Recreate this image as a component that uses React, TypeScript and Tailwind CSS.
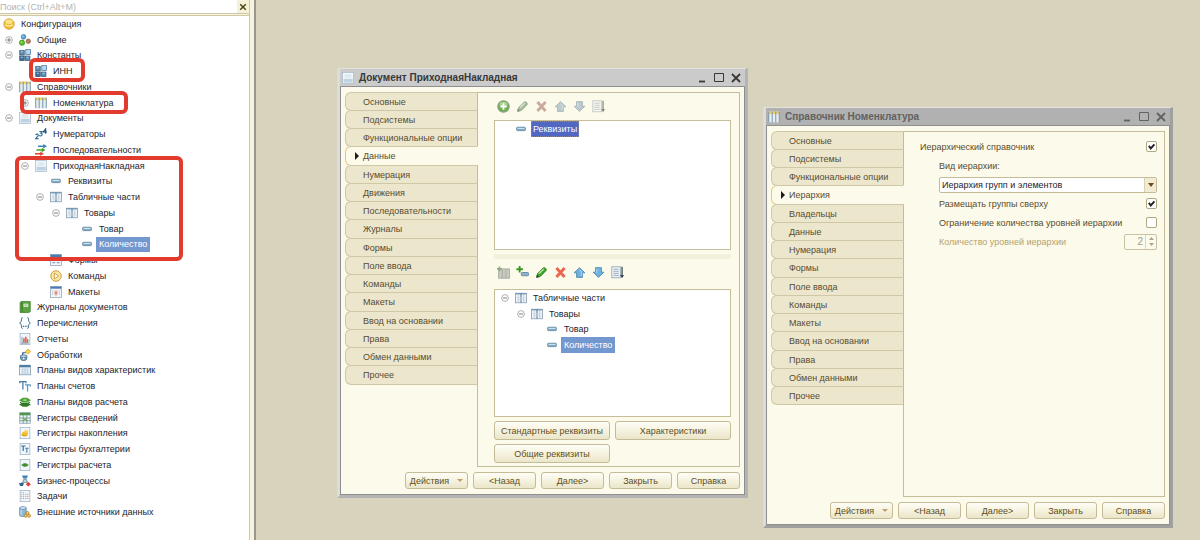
import { useState } from "react";
import type { ReactNode } from "react";
import clsx from "clsx";

type TreeNode = {
  level: 0 | 1 | 2 | 3 | 4 | 5;
  icon: string;
  label: string;
  toggle?: "plus" | "minus";
};

const TREE: TreeNode[] = [
  { level: 0, icon: "config", label: "Конфигурация" },
  { level: 1, icon: "common", label: "Общие", toggle: "plus" },
  { level: 1, icon: "constants", label: "Константы", toggle: "minus" },
  { level: 2, icon: "constants", label: "ИНН" },
  { level: 1, icon: "catalog", label: "Справочники", toggle: "minus" },
  { level: 2, icon: "catalog", label: "Номенклатура", toggle: "plus" },
  { level: 1, icon: "doc", label: "Документы", toggle: "minus" },
  { level: 2, icon: "numerators", label: "Нумераторы" },
  { level: 2, icon: "sequences", label: "Последовательности" },
  { level: 2, icon: "doc", label: "ПриходнаяНакладная", toggle: "minus" },
  { level: 3, icon: "attr", label: "Реквизиты" },
  { level: 3, icon: "tabular", label: "Табличные части", toggle: "minus" },
  { level: 4, icon: "tabular", label: "Товары", toggle: "minus" },
  { level: 5, icon: "attr", label: "Товар" },
  { level: 5, icon: "attr", label: "Количество" },
  { level: 3, icon: "forms", label: "Формы" },
  { level: 3, icon: "commands", label: "Команды" },
  { level: 3, icon: "templates", label: "Макеты" },
  { level: 1, icon: "journal", label: "Журналы документов" },
  { level: 1, icon: "enums", label: "Перечисления" },
  { level: 1, icon: "report", label: "Отчеты" },
  { level: 1, icon: "processing", label: "Обработки" },
  { level: 1, icon: "charTypes", label: "Планы видов характеристик" },
  { level: 1, icon: "accounts", label: "Планы счетов" },
  { level: 1, icon: "calcTypes", label: "Планы видов расчета" },
  { level: 1, icon: "infoReg", label: "Регистры сведений" },
  { level: 1, icon: "accumReg", label: "Регистры накопления" },
  { level: 1, icon: "accountReg", label: "Регистры бухгалтерии" },
  { level: 1, icon: "calcReg", label: "Регистры расчета" },
  { level: 1, icon: "process", label: "Бизнес-процессы" },
  { level: 1, icon: "task", label: "Задачи" },
  { level: 1, icon: "external", label: "Внешние источники данных" },
];

const TABULAR: TreeNode[] = [
  { level: 1, icon: "tabular", label: "Табличные части", toggle: "minus" },
  { level: 2, icon: "tabular", label: "Товары", toggle: "minus" },
  { level: 3, icon: "attr", label: "Товар" },
  { level: 3, icon: "attr", label: "Количество" },
];

const DOC_TABS = [
  "Основные", "Подсистемы", "Функциональные опции", "Данные", "Нумерация", "Движения",
  "Последовательности", "Журналы", "Формы", "Поле ввода", "Команды", "Макеты",
  "Ввод на основании", "Права", "Обмен данными", "Прочее",
];

const CATALOG_TABS = [
  "Основные", "Подсистемы", "Функциональные опции", "Иерархия", "Владельцы", "Данные",
  "Нумерация", "Формы", "Поле ввода", "Команды", "Макеты", "Ввод на основании", "Права",
  "Обмен данными", "Прочее",
];

const INDENT = ["pl-px", "pl-px", "pl-[17px]", "pl-[32px]", "pl-[48px]", "pl-[63px]"];

const page = <rect x="1.5" y="0.5" width="13" height="15" fill="#f2f6fa" stroke="#9db2c4" />;

const ICONS: Record<string, ReactNode> = {
  config: (
    <>
      <circle cx="8" cy="8" r="7" fill="#f0bd33" stroke="#d09a2c" />
      <ellipse cx="8" cy="5" rx="4.8" ry="3" fill="#fbe48c" />
      <path d="M2.5 9.4c3 1.2 8 1.2 11 0" fill="none" stroke="#fff0b4" strokeWidth="1.6" />
    </>
  ),
  common: (
    <>
      <circle cx="6" cy="3.8" r="3.1" fill="#5aa2d6" stroke="#3a7fb4" />
      <circle cx="4" cy="11.6" r="3.5" fill="#62c02c" stroke="#3f8f1b" />
      <circle cx="12.4" cy="9.6" r="2.9" fill="#b98465" stroke="#8d5b40" />
      <circle cx="5.2" cy="3" r="1" fill="#c5e2f6" />
      <circle cx="3.2" cy="10.6" r="1.1" fill="#c4eea4" />
    </>
  ),
  constants: (
    <>
      <rect x="1" y="2" width="6" height="6" fill="#5e8fb5" stroke="#31607f" />
      <rect x="9" y="0.8" width="6.4" height="6.4" fill="#b9d4e8" stroke="#4c7da3" />
      <rect x="1" y="9.4" width="6" height="6" fill="#3f719a" stroke="#28516f" />
      <rect x="8.6" y="9.4" width="6" height="6" fill="#5e8fb5" stroke="#31607f" />
      <path d="M2.4 3.6h3M2.4 11h3M10 11h3M11 3h2.6" stroke="#cfe2f0" />
    </>
  ),
  catalog: (
    <>
      <rect x="0.7" y="1" width="14.6" height="14" fill="#eef3f5" />
      <rect x="0.7" y="0.8" width="14.6" height="3.4" fill="#ecd06a" />
      <path d="M1 1v14M5.6 1v14M10.4 1v14M15 1v14" stroke="#6f8ea3" strokeWidth="1.3" />
      <path d="M3.3 5v10M8 5v10M12.7 5v10" stroke="#dfe8ee" />
    </>
  ),
  doc: (
    <>
      <rect x="0.6" y="0.6" width="14.8" height="14.8" fill="#f3f8fc" stroke="#a9bac8" />
      <rect x="2.2" y="9" width="12" height="5" fill="#bed2e2" />
      <path d="M3.5 4h9M3.5 6.6h9" stroke="#c3d3df" />
    </>
  ),
  numerators: (
    <>
      <path d="M0.8 9.2c1-1.7 4-1.3 3.6.6-.2 1.6-2.8 2.8-3.6 4.4h4" fill="none" stroke="#2c6c96" strokeWidth="1.5" />
      <path d="M5.8 4.6h3.6L7.6 7c2.6-.2 2.6 3.6-.2 3.6-.8 0-1.4-.3-1.8-.8" fill="none" stroke="#2c6c96" strokeWidth="1.5" />
      <path d="M14.2 7.6V1.2L11 5.4h5" fill="none" stroke="#1f4f74" strokeWidth="1.5" />
    </>
  ),
  sequences: (
    <>
      <path d="M4 2h7V0l5 3-5 3V4H4z" fill="#3b83b5" />
      <path d="M2 7h7V5l5 3-5 3V9H2z" fill="#46a12c" />
      <path d="M0 12h7v-2l5 3-5 3v-2H0z" fill="#e2452f" />
    </>
  ),
  attr: (
    <>
      <rect x="2" y="5.6" width="12" height="4.6" rx="1.4" fill="#86a9c2" stroke="#5c86a3" />
      <path d="M3.5 7.3h9" stroke="#d9e8f3" strokeWidth="1.2" />
    </>
  ),
  tabular: (
    <>
      <rect x="0.8" y="1.6" width="14.4" height="12.8" fill="#eef4f8" stroke="#7f97ab" />
      <path d="M1 2.4h14" stroke="#6f93b5" strokeWidth="1.6" />
      <path d="M8 2v12.4" stroke="#55758f" strokeWidth="1.4" />
      <path d="M4.4 4v10M11.6 4v10" stroke="#b4c6d4" />
      <path d="M2 7.5h12M2 10.5h12" stroke="#ccd9e3" />
    </>
  ),
  forms: (
    <>
      <rect x="0.8" y="0.8" width="14.4" height="14.4" fill="#f3f6f9" stroke="#8fa3b6" />
      <rect x="0.8" y="0.8" width="14.4" height="3.4" fill="#4d7db0" />
      <rect x="9" y="6" width="4" height="2.4" fill="#e2a08c" />
      <path d="M3 7h4M3 11.5h4M9 11.5h4" stroke="#8ea4b8" strokeWidth="1.6" />
    </>
  ),
  commands: (
    <>
      <circle cx="8" cy="8" r="7" fill="#f8e6a8" stroke="#cf9d35" strokeWidth="1.3" />
      <path d="M5.8 4l5.6 4-5.6 4z" fill="#fffdf2" stroke="#c08a2a" />
    </>
  ),
  templates: (
    <>
      <rect x="0.8" y="0.8" width="14.4" height="14.4" fill="#f3f6f9" stroke="#8fa3b6" />
      <rect x="0.8" y="0.8" width="14.4" height="2.8" fill="#4d7db0" />
      <path d="M3.5 5.5v7M12.5 5.5v7" stroke="#9ab0c4" strokeDasharray="1.5 1" />
      <path d="M8 5.2v8M5.4 9.2h5.2M6.2 7l3.6 4.4M9.8 7l-3.6 4.4" stroke="#dd6a5a" strokeWidth="0.9" />
    </>
  ),
  journal: (
    <>
      <path d="M1.5 1.8L4 .6h11v13.6l-2.2 1.2H1.5z" fill="#5ca342" stroke="#3c7d27" />
      <path d="M4 1v14" stroke="#2f6b1e" />
      <rect x="6" y="3.6" width="6.4" height="4.4" fill="#e4f3dc" />
      <path d="M7 5h4.4M7 6.6h4.4" stroke="#6aa653" strokeWidth="0.7" />
    </>
  ),
  enums: (
    <>
      <path d="M5 .8C2.4.8 3.6 3.4 3 5.6 2.7 7 1.6 7.8.8 8c.8.2 1.9 1 2.2 2.4.6 2.2-.6 4.8 2 4.8" fill="none" stroke="#3e6f94" strokeWidth="1.3" />
      <path d="M11 .8c2.6 0 1.4 2.6 2 4.8.3 1.4 1.4 2.2 2.2 2.4-.8.2-1.9 1-2.2 2.4-.6 2.2.6 4.8-2 4.8" fill="none" stroke="#3e6f94" strokeWidth="1.3" />
      <path d="M5 12.5h1.6M7.6 12.5h1.6M10 12.5h1.2" stroke="#3e6f94" strokeWidth="1.4" />
    </>
  ),
  report: (
    <>
      {page}
      <path d="M4 5v9" stroke="#9ab4ca" strokeWidth="1.6" />
      <path d="M6.6 7v6M9.2 5v8" stroke="#d8402f" strokeWidth="1.8" />
      <path d="M11.6 8.4v4.6" stroke="#4f9e3c" strokeWidth="1.8" />
      <path d="M3 13.6h10" stroke="#6d879c" />
    </>
  ),
  processing: (
    <>
      <path d="M12 0l3.6 3.4L12 7 8.4 3.4z" fill="#f6d24e" stroke="#c69524" strokeWidth="0.8" />
      <path d="M2 9.5h8.4v3.2c0 1.6-1.6 2.6-4.2 2.6S2 14.3 2 12.7z" fill="#6c9cc0" stroke="#2e5e82" />
      <path d="M5 8.5V5h4" fill="none" stroke="#2e5e82" strokeWidth="1.6" />
      <ellipse cx="6.2" cy="9.5" rx="4.6" ry="1.6" fill="#dce9f2" stroke="#2e5e82" />
      <circle cx="6.2" cy="12.7" r="1.3" fill="#e8f1f7" />
    </>
  ),
  charTypes: (
    <>
      <rect x="0.8" y="1.6" width="14.4" height="12.8" fill="#eef4f8" stroke="#7896ad" />
      <rect x="0.8" y="1.4" width="14.4" height="3" fill="#4a7ea8" />
      <path d="M5 5v9M8 5v9M11 5v9" stroke="#a5bccd" />
      <path d="M2 7.5h12M2 9.8h12M2 12h12" stroke="#c6d5e0" strokeWidth="0.8" />
    </>
  ),
  accounts: (
    <>
      <path d="M1 2.2h8.4M5.2 2v10.6M1 1.4v2.8M9.2 1.4v2.8" fill="none" stroke="#3e7fae" strokeWidth="1.7" />
      <path d="M8 6.4h7.2M11.4 6.4v8.8M15 6v2.6" fill="none" stroke="#5d98c2" strokeWidth="1.7" />
    </>
  ),
  calcTypes: (
    <>
      <path d="M0 11.2L5 9h6l5 2.2-5 3H5z" fill="#37802a" />
      <path d="M0 5.6l5-3.2h6l5 3.2-5 3.2H5z" fill="#4fa23a" />
      <path d="M1.5 8.4L5.500 11h5l4-2.600" fill="none" stroke="#2c6d21" strokeWidth="1.4" />
      <ellipse cx="8" cy="5.4" rx="2.6" ry="1.2" fill="#a9d99a" />
    </>
  ),
  infoReg: (
    <>
      <rect x="1" y="1" width="14" height="14" fill="#f0f5f8" stroke="#7f9bb0" />
      <rect x="1" y="1" width="14" height="3.4" fill="#4c9a4a" />
      <path d="M5.6 1v14M10.4 1v14M1 8h14M1 11.6h14" stroke="#5c8a78" />
      <rect x="6.2" y="8.6" width="3.6" height="2.5" fill="#6ab65a" />
    </>
  ),
  accumReg: (
    <>
      {page}
      <ellipse cx="7.4" cy="10.4" rx="4" ry="2.2" fill="#e2a51e" />
      <ellipse cx="8" cy="8.2" rx="4" ry="2.2" fill="#f2c235" />
      <ellipse cx="9.6" cy="5.6" rx="2.8" ry="1.6" fill="#f8d65e" />
    </>
  ),
  accountReg: (
    <>
      {page}
      <path d="M3 4h5.600M5.6 4v6.600" fill="none" stroke="#2f6f9f" strokeWidth="1.6" />
      <path d="M8 7h5M10.4 7v6" fill="none" stroke="#4a89b6" strokeWidth="1.6" />
    </>
  ),
  calcReg: (
    <>
      {page}
      <path d="M3 8l3.5-2.2h3L13 8l-3.5 2.2h-3z" fill="#3f8f2c" />
    </>
  ),
  process: (
    <>
      <path d="M4 .6h8l-1.6 4H5.6z" fill="#3f84b8" />
      <path d="M8 4.6V8M3 10.5L8 7.5l5 3" fill="none" stroke="#5c7286" strokeWidth="1.2" />
      <rect x="5.5" y="6.4" width="5" height="3.6" fill="#c9dbe8" stroke="#57758d" strokeWidth="0.8" />
      <path d="M0 10.8h6.6l-1.4 4H1.4z" fill="#35688f" />
      <path d="M12.4 9.4l3.4 3-3.4 3-3.4-3z" fill="#e0412e" />
    </>
  ),
  task: (
    <>
      {page}
      <path d="M3.6 3v10M6 3v10" stroke="#8ba7bf" strokeWidth="1.2" strokeDasharray="1.4 1.2" />
      <path d="M9 5v8M11.8 5v8" stroke="#c98a86" strokeWidth="1.4" strokeDasharray="1.4 1.4" />
    </>
  ),
  external: (
    <>
      <path d="M0.8 2.6v9.6c0 1 2 1.8 4.4 1.8s4.4-.8 4.4-1.8V2.6z" fill="#8fb8d6" stroke="#4b81a8" strokeWidth="0.9" />
      <ellipse cx="5.2" cy="2.6" rx="4.4" ry="1.8" fill="#dbeaf5" stroke="#4b81a8" strokeWidth="0.9" />
      <path d="M2.8 5v7.5" stroke="#d5e7f4" strokeWidth="1.3" />
      <circle cx="9" cy="13" r="2" fill="#f2d077" stroke="#a8781c" />
      <circle cx="13.4" cy="13" r="2" fill="#f2d077" stroke="#a8781c" />
      <circle cx="11.2" cy="9.2" r="2" fill="#f2d077" stroke="#a8781c" />
    </>
  ),
  add: (
    <>
      <circle cx="8" cy="8" r="7" fill="#6db24e" stroke="#8d9f86" strokeWidth="1.4" />
      <ellipse cx="8" cy="5" rx="5" ry="3" fill="#a3d489" />
      <path d="M8 4v8M4 8h8" stroke="#fff" strokeWidth="2.2" />
    </>
  ),
  addTable: (
    <>
      <rect x="2" y="3.6" width="13.4" height="11.4" fill="#c8cac0" stroke="#a3a79c" />
      <path d="M6.4 4v11M11 4v11" stroke="#a3a79c" />
      <path d="M3 .5v6M0 3.5h6" stroke="#8fa67e" strokeWidth="1.8" />
    </>
  ),
  addAttr: (
    <>
      <path d="M4.5 0v8M.5 4h8" stroke="#35961f" strokeWidth="2.2" />
      <rect x="6.5" y="8" width="9" height="4" rx="1.2" fill="#8fb2cb" stroke="#547f9d" />
    </>
  ),
  edit: (
    <>
      <path d="M2 13.8l1-4.2 7.4-7.4c1.6-.8 4 1.4 3.4 3.2L6.4 13z" fill="#3fa32b" stroke="#257817" />
      <path d="M4.8 9.6l6-6" stroke="#b4e4a0" strokeWidth="1.6" />
      <path d="M1.6 14.4l.8-3.4 2.6 2.4z" fill="#2a3c24" />
    </>
  ),
  remove: <path d="M3 2.5l10 11M13 2.5l-10 11" stroke="#ea6650" strokeWidth="3.6" />,
  up: (
    <>
      <path d="M8 2l6.6 6.4h-3V14H4.4V8.400h-3z" fill="#6fb2e2" stroke="#4a82a8" />
      <path d="M8 4.6l2.6 2.6v5" fill="none" stroke="#c3e2f6" />
    </>
  ),
  down: (
    <>
      <path d="M8 14l6.6-6.4h-3V2H4.4v5.600h-3z" fill="#6fb2e2" stroke="#4a82a8" />
      <path d="M6 3.500v5" stroke="#c3e2f6" />
    </>
  ),
  sort: (
    <>
      <rect x="1" y="1" width="10.5" height="13.5" fill="#f0f4f7" stroke="#8ba0b1" />
      <path d="M3 4h6.5M3 6.5h6.5M3 9h6.5M3 11.5h6.5" stroke="#8ba0b1" />
      <path d="M13.6 1v11" stroke="#333d45" strokeWidth="1.5" />
      <path d="M11.2 11h4.8l-2.4 4z" fill="#333d45" />
    </>
  ),
};

function Icon({ name, className }: { name: string; className?: string }) {
  return (
    <svg viewBox="0 0 16 16" className={clsx("shrink-0", className ?? "size-3")} aria-hidden="true">
      {ICONS[name]}
    </svg>
  );
}

function Toggle({ kind }: { kind: "plus" | "minus" }) {
  return (
    <svg viewBox="0 0 10 10" className="size-2" aria-hidden="true">
      <circle cx="5" cy="5" r="4.2" fill="#fff" stroke="#9c9c96" />
      <path d={kind === "plus" ? "M2.5 5h5M5 2.5v5" : "M2.5 5h5"} stroke="#6e6e68" strokeWidth="1.1" />
    </svg>
  );
}

function TreeRow({ node, selected, onSelect }: { node: TreeNode; selected: boolean; onSelect: () => void }) {
  return (
    <li
      role="treeitem"
      aria-selected={selected}
      onClick={onSelect}
      className={clsx("flex flex-1 items-stretch whitespace-nowrap cursor-default", INDENT[node.level])}
    >
      {node.level > 0 && (
        <span className="w-4 flex items-center justify-center">{node.toggle && <Toggle kind={node.toggle} />}</span>
      )}
      <span className="w-4 flex items-center justify-center">
        <Icon name={node.icon} />
      </span>
      <span className={clsx("ml-px px-[3px] flex items-center", selected ? "bg-[#7398d0] text-white" : "text-[#23232d]")}>
        {node.label}
      </span>
    </li>
  );
}

function Sidebar() {
  const [selected, setSelected] = useState(14);
  return (
    <aside className="w-64 shrink-0 flex bg-[#f8f4dc]">
      <div className="relative flex-1 bg-white">
        <div className="flex h-[14px] items-center border-b border-[#cfc7a6]">
          <input
            type="text"
            aria-label="Поиск"
            placeholder="Поиск (Ctrl+Alt+M)"
            className="flex-1 min-w-0 h-3 bg-transparent outline-none placeholder:text-[#b3b3b3]"
          />
          <button type="button" aria-label="Очистить" className="w-3 h-[13px] bg-[#f6f2da] flex items-center justify-center">
            <svg viewBox="0 0 8 8" className="size-2">
              <path d="M1.2 1.2l5.600 5.600M6.8 1.2L1.2 6.8" stroke="#4d4212" strokeWidth="1.5" />
            </svg>
          </button>
        </div>
        <div className="h-0.5 bg-[#f8f4dc] border-b border-[#cfc7a6]" />
        <ul role="tree" className="flex flex-col h-[504px]">
          {TREE.map((node, i) => (
            <TreeRow key={i} node={node} selected={i === selected} onSelect={() => setSelected(i)} />
          ))}
        </ul>

        {/* Callouts */}
        <div className="absolute left-[29px] top-[58px] w-[56px] h-[24px] rounded-md border-4 border-[#e23b2e] pointer-events-none" />
        <div className="absolute left-[20px] top-[91px] w-[108px] h-[23px] rounded-md border-4 border-[#e23b2e] pointer-events-none" />
        <div className="absolute left-[15px] top-[156px] w-[168px] h-[105px] rounded-md border-4 border-[#e23b2e] pointer-events-none" />
      </div>
      <div className="w-[7px] border-l border-[#d0c9a8] border-r-2 border-r-[#98968e]" />
    </aside>
  );
}

function WindowFrame({ title, icon, active, className, children }: {
  title: string;
  icon: string;
  active?: boolean;
  className: string;
  children: ReactNode;
}) {
  return (
    <section
      className={clsx(
        "absolute flex flex-col border-3 border-t border-t-[#e4e2da] border-l-[#dddcd6]",
        active ? "border-r-[#b4b4b4] border-b-[#b4b4b4]" : "border-r-[#a0a0a0] border-b-[#a0a0a0]",
        className,
      )}
    >
      <header
        className={clsx(
          "h-[17px] flex items-center pt-px pl-0.5 pr-[3px] text-[10px] font-bold",
          active ? "bg-[#cbcbcb] text-[#383838]" : "bg-[#b1b1b1] text-[#626262]",
        )}
      >
        <Icon name={icon} />
        <h2 className="ml-[5px] flex-1 whitespace-nowrap">{title}</h2>
        <div className="flex gap-[5px]">
          <button type="button" aria-label="Свернуть" className="size-3">
            <svg viewBox="0 0 12 12"><path d="M3 9.5h6" stroke="currentColor" strokeWidth="1.8" /></svg>
          </button>
          <button type="button" aria-label="Развернуть" className="size-3">
            <svg viewBox="0 0 12 12"><path d="M1.5 1.5h9v8h-9z" fill="none" stroke="currentColor" /></svg>
          </button>
          <button type="button" aria-label="Закрыть" className="size-3">
            <svg viewBox="0 0 12 12"><path d="M2 2l8 8M10 2l-8 8" stroke="currentColor" strokeWidth="1.8" /></svg>
          </button>
        </div>
      </header>
      <div className="flex-1 flex flex-col gap-[5px] border border-[#8f8f8f] bg-[#fcfaea] pl-1 pr-1 pt-[5px] pb-[5px] text-[#584c30]">
        {children}
      </div>
    </section>
  );
}

function Tabs({ items, initial, children }: { items: string[]; initial: string; children: ReactNode }) {
  const [current, setCurrent] = useState(initial);
  return (
    <div className="flex-1 flex">
      <div role="tablist" aria-orientation="vertical" className="w-[133px] -mr-px z-10 flex flex-col">
        {items.map((t, i) => (
          <button
            key={t}
            type="button"
            role="tab"
            aria-selected={t === current}
            onClick={() => setCurrent(t)}
            className={clsx(
              "flex items-center pl-[9px] text-left rounded-l-md border border-[#cfc8a6] -mb-px whitespace-nowrap",
              i % 4 === 3 ? "h-5" : "h-[19px]",
              t === current ? "bg-[#fcfaea] border-l-[#e8c765] border-r-[#fcfaea]" : "bg-[#ece6cd] border-r-[#c3bb94]",
            )}
          >
            <span className="w-2">
              {t === current && (
                <svg viewBox="0 0 4 8" className="h-2 w-1"><path d="M0 0l4 4-4 4z" fill="#1c1c1c" /></svg>
              )}
            </span>
            {t}
          </button>
        ))}
      </div>
      <div role="tabpanel" className="flex-1 border border-[#c6be98] flex flex-col">{children}</div>
    </div>
  );
}

const buttonClass =
  "rounded-[3px] border border-[#c4bc96] bg-linear-to-b from-[#fffef6] to-[#ebe6c9] text-[#5f4f20] flex items-center justify-center whitespace-nowrap";

function Footer() {
  return (
    <div className="flex justify-end gap-[5px]">
      <button type="button" className={clsx(buttonClass, "w-[63px] h-[17px] gap-2")}>
        Действия
        <svg viewBox="0 0 6 3" className="w-[6px] h-[3px]"><path d="M0 0h6L3 3z" fill="#c39c6c" /></svg>
      </button>
      {["<Назад", "Далее>", "Закрыть", "Справка"].map((t) => (
        <button key={t} type="button" className={clsx(buttonClass, "w-[63px] h-[17px]")}>{t}</button>
      ))}
    </div>
  );
}

type Tool = { icon: string; label: string; off?: boolean };

const ATTR_TOOLS: Tool[] = [
  { icon: "add", label: "Добавить" },
  { icon: "edit", label: "Изменить", off: true },
  { icon: "remove", label: "Удалить", off: true },
  { icon: "up", label: "Вверх", off: true },
  { icon: "down", label: "Вниз", off: true },
  { icon: "sort", label: "Сортировать", off: true },
];

const TABULAR_TOOLS: Tool[] = [
  { icon: "addTable", label: "Добавить табличную часть" },
  { icon: "addAttr", label: "Добавить реквизит" },
  { icon: "edit", label: "Изменить" },
  { icon: "remove", label: "Удалить" },
  { icon: "up", label: "Вверх" },
  { icon: "down", label: "Вниз" },
  { icon: "sort", label: "Сортировать" },
];

function Toolbar({ tools }: { tools: Tool[] }) {
  return (
    <div className="flex h-[27px] items-center">
      {tools.map((t) => (
        <button key={t.label} type="button" title={t.label} disabled={t.off} className="w-[19px] flex justify-center">
          <Icon name={t.icon} className={clsx("size-[13px]", t.off && "opacity-60 grayscale-60")} />
        </button>
      ))}
    </div>
  );
}

function DocumentWindow() {
  const [selected, setSelected] = useState(3);
  return (
    <WindowFrame title="Документ ПриходнаяНакладная" icon="doc" active className="left-[81px] top-[68px] w-[411px] h-[430px]">
      <Tabs items={DOC_TABS} initial="Данные">
        <div className="pl-4 pr-2">
          <Toolbar tools={ATTR_TOOLS} />
          <div className="h-[130px] border border-[#c6be98] bg-white pl-5">
            <div className="flex h-4 items-stretch">
              <span className="w-4 flex items-center"><Icon name="attr" /></span>
              <span className="px-px flex items-center bg-[#5067c4] text-white border border-dotted border-[#8a86a0]">Реквизиты</span>
            </div>
          </div>
          <div className="h-[5px] mt-1 bg-[#f3f0dc]" />
          <Toolbar tools={TABULAR_TOOLS} />
          <ul role="tree" className="flex flex-col h-[128px] border border-[#c6be98] bg-white pl-px pb-[63px] mt-[3px]">
            {TABULAR.map((node, i) => (
              <TreeRow key={node.label} node={node} selected={i === selected} onSelect={() => setSelected(i)} />
            ))}
          </ul>
          <div className="grid grid-cols-2 gap-x-[5px] gap-y-1 mt-1">
            {["Стандартные реквизиты", "Характеристики", "Общие реквизиты"].map((t) => (
              <button key={t} type="button" className={clsx(buttonClass, "h-[19px]")}>{t}</button>
            ))}
          </div>
        </div>
      </Tabs>
      <Footer />
    </WindowFrame>
  );
}

function CheckRow({ label, checked }: { label: string; checked?: boolean }) {
  return (
    <label className="flex h-[19px] items-center justify-between">
      {label}
      <span className="relative size-[11px]">
        <input
          type="checkbox"
          defaultChecked={checked}
          className="peer block size-[11px] appearance-none rounded-xs border border-[#b0a885] bg-white"
        />
        <svg viewBox="0 0 11 11" className="absolute inset-0 hidden peer-checked:block pointer-events-none">
          <path d="M2.8 4.8l2 2.6 3.600-4" fill="none" stroke="#222" strokeWidth="1.9" />
        </svg>
      </span>
    </label>
  );
}

function CatalogWindow() {
  return (
    <WindowFrame title="Справочник Номенклатура" icon="catalog" className="left-[507px] top-[107px] w-[410px] h-[421px]">
      <Tabs items={CATALOG_TABS} initial="Иерархия">
        <div className="pl-4 pr-[7px] pt-[5px]">
          <CheckRow label="Иерархический справочник" checked />
          <div className="pl-[19px]">
            <label htmlFor="hierarchy-kind" className="flex h-[19px] items-center">Вид иерархии:</label>
            <div className="relative mt-0.5 mb-px">
              <select
                id="hierarchy-kind"
                className="block w-full h-4 appearance-none rounded-xs border border-[#c4bc96] bg-white pl-0.5 text-[#23232d] outline-none"
              >
                <option>Иерархия групп и элементов</option>
                <option>Иерархия элементов</option>
              </select>
              <span className="absolute right-px top-px h-[14px] w-3 bg-[#f0ebd2] border-l border-[#d8d1b2] flex items-center justify-center pointer-events-none">
                <svg viewBox="0 0 6 4" className="w-[6px] h-1"><path d="M0 0h6L3 4z" fill="#6e4b12" /></svg>
              </span>
            </div>
            <CheckRow label="Размещать группы сверху" checked />
            <CheckRow label="Ограничение количества уровней иерархии" />
            <div className="flex h-[19px] items-center justify-between text-[#b5a26c]">
              <label htmlFor="level-count">Количество уровней иерархии</label>
              <div className="flex h-4 w-[33px] rounded-xs border border-[#c9c2a2] text-[#9a9a92]">
                <input
                  id="level-count"
                  type="text"
                  inputMode="numeric"
                  defaultValue="2"
                  disabled
                  className="w-5 pr-0.5 text-right text-[10px] bg-transparent"
                />
                <span className="flex-1 border-l border-[#ddd7bd] flex flex-col items-center justify-center gap-[3px]">
                  <svg viewBox="0 0 5 3" className="w-[5px] h-[3px]"><path d="M0 3h5L2.5 0z" fill="#a5a596" /></svg>
                  <svg viewBox="0 0 5 3" className="w-[5px] h-[3px]"><path d="M0 0h5L2.5 3z" fill="#a5a596" /></svg>
                </span>
              </div>
            </div>
          </div>
        </div>
      </Tabs>
      <Footer />
    </WindowFrame>
  );
}

export default function App() {
  return (
    <div className="min-h-screen flex bg-[#d8d3bd] font-['Liberation_Sans',Arial,sans-serif] text-[9px] leading-3 overflow-hidden">
      <Sidebar />
      <main className="relative flex-1">
        <DocumentWindow />
        <CatalogWindow />
      </main>
    </div>
  );
}
